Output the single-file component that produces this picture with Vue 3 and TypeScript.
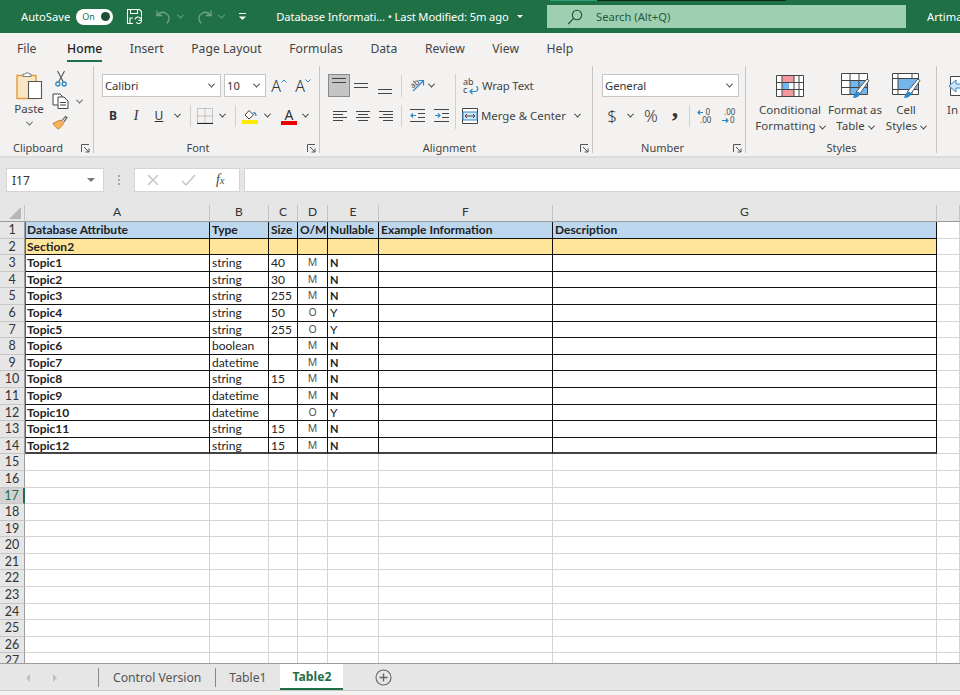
<script setup lang="ts">
interface Row {
  name: string
  type: string
  size: string
  om: string
  nullable: string
}

const tabs = ['File', 'Home', 'Insert', 'Page Layout', 'Formulas', 'Data', 'Review', 'View', 'Help']
const columns = ['A', 'B', 'C', 'D', 'E', 'F', 'G', '']

const rows: Row[] = [
  { name: 'Topic1', type: 'string', size: '40', om: 'M', nullable: 'N' },
  { name: 'Topic2', type: 'string', size: '30', om: 'M', nullable: 'N' },
  { name: 'Topic3', type: 'string', size: '255', om: 'M', nullable: 'N' },
  { name: 'Topic4', type: 'string', size: '50', om: 'O', nullable: 'Y' },
  { name: 'Topic5', type: 'string', size: '255', om: 'O', nullable: 'Y' },
  { name: 'Topic6', type: 'boolean', size: '', om: 'M', nullable: 'N' },
  { name: 'Topic7', type: 'datetime', size: '', om: 'M', nullable: 'N' },
  { name: 'Topic8', type: 'string', size: '15', om: 'M', nullable: 'N' },
  { name: 'Topic9', type: 'datetime', size: '', om: 'M', nullable: 'N' },
  { name: 'Topic10', type: 'datetime', size: '', om: 'O', nullable: 'Y' },
  { name: 'Topic11', type: 'string', size: '15', om: 'M', nullable: 'N' },
  { name: 'Topic12', type: 'string', size: '15', om: 'M', nullable: 'N' }
]

const emptyRows = [15, 16, 17, 18, 19, 20, 21, 22, 23, 24, 25, 26, 27]
</script>

<template>
  <div class="app">
    <header class="titlebar">
      <span class="autosave">AutoSave</span>
      <span class="toggle"><span>On</span><i></i></span>
      <svg class="t-save" width="17" height="17" viewBox="0 0 17 17" fill="none" stroke="#fff" stroke-width="1.1">
        <path d="M7 15.5H1.5v-14h12l2 2v5" />
        <path d="M4.5 1.5v4h7v-4M4 15v-5h3" />
        <path d="M9 11.5a3 3 0 0 1 5.4-1.2l1-.9v3h-3M15.6 13a3 3 0 0 1-5.3 1.4" />
      </svg>
      <svg class="t-undo" width="15" height="16" viewBox="0 0 15 16" fill="none" stroke="#6fa68a" stroke-width="1.3">
        <path d="M1 1.5v5h5M1.4 6.2C3.5 3.5 7 2.6 10 4.2c3.6 2 4 6.6 1 10" />
      </svg>
      <span class="chev dim t-c1"></span>
      <svg class="t-redo" width="15" height="16" viewBox="0 0 15 16" fill="none" stroke="#6fa68a" stroke-width="1.3">
        <path d="M14 1.5v5H9M13.6 6.2C11.5 3.5 8 2.6 5 4.2c-3.6 2-4 6.6-1 10" />
      </svg>
      <span class="chev dim t-c2"></span>
      <svg class="t-more" width="9" height="8" viewBox="0 0 9 8" fill="#fff">
        <rect x="1" y="0" width="7" height="1" />
        <path d="M1 3.500h7L4.500 7z" />
      </svg>
      <span class="doc-title">Database Informati... • Last Modified: 5m ago</span>
      <span class="tri-down"></span>
      <div class="search">
        <svg width="16" height="16" viewBox="0 0 16 16" fill="none" stroke="#14523a" stroke-width="1.1">
          <circle cx="10" cy="6" r="4.7" />
          <path d="M6.6 9.4 1.2 15" />
        </svg>
        <span>Search (Alt+Q)</span>
      </div>
      <span class="user">Artima</span>
      <span class="strip"><b></b><i></i></span>
    </header>

    <nav class="menu">
      <span v-for="tab in tabs" :key="tab" class="menu-item" :class="{ active: tab === 'Home' }">{{ tab }}</span>
    </nav>

    <section class="ribbon">
      <!-- Clipboard -->
      <div class="group g-clip">
        <div class="clip-body">
          <div class="paste">
            <svg width="28" height="31" viewBox="0 0 28 31" fill="none">
              <path d="M2 5.500h19v23H2z" fill="#fbe6c4" stroke="#e59a3a" stroke-width="1.4" />
              <path d="M8 5.500V4h2.500a1.800 1.800 0 0 1 3.500 0H16v2.500H8z" fill="#fff" stroke="#7a7a7a" />
              <path d="M13.500 11.500h13v17h-13z" fill="#fff" stroke="#555" stroke-width="1.1" />
            </svg>
            <span class="paste-label">Paste</span>
            <span class="chev"></span>
          </div>
          <div class="clip-tools">
            <svg width="12" height="17" viewBox="0 0 12 17" fill="none" stroke="#555" stroke-width="1.1">
              <path d="M2.500 1 8.400 12M9.500 1 3.600 12" />
              <circle cx="2.800" cy="14" r="2" stroke="#2e87c9" stroke-width="1.3" />
              <circle cx="9.200" cy="14" r="2" stroke="#2e87c9" stroke-width="1.3" />
            </svg>
            <div class="copy-row">
              <svg width="17" height="16" viewBox="0 0 17 16" fill="#fff" stroke="#444" stroke-width="1">
                <path d="M1 1h7l2 2v9H1z" />
                <path d="M6 4h6l4 4v7.500H6z" />
                <path d="M8 9.500h6M8 12h6" />
              </svg>
              <span class="chev"></span>
            </div>
            <svg width="16" height="15" viewBox="0 0 16 15" fill="none">
              <path d="M9.500 6 13.500 1.500l1.500 1.200-3.500 4.600" stroke="#555" stroke-width="1.1" />
              <path d="M1 8.500 8 5l3.500 4-5 5.200C4.500 13 2.500 11 1 8.500z" fill="#f3b45f" stroke="#d9822b" />
            </svg>
          </div>
        </div>
        <div class="group-label">Clipboard</div>
        <svg class="launcher" width="9" height="9" viewBox="0 0 9 9" fill="none" stroke="#555"><path d="M.5 8V.5H8M3 3l5 5M8 4.500V8H4.500" /></svg>
      </div>

      <!-- Font -->
      <div class="group g-font">
        <div class="group-body">
          <div class="tool-row">
            <div class="combo font-name"><span>Calibri</span><span class="chev dark"></span></div>
            <div class="combo font-size"><span>10</span><span class="chev dark"></span></div>
            <span class="btn w16 ml5 grow-a">A<svg width="6" height="4" viewBox="0 0 6 4" fill="none" stroke="#2e87c9"><path d="M.5 3.500 3 1l2.500 2.500" /></svg></span>
            <span class="btn w16 ml8 shrink-a">A<svg width="6" height="4" viewBox="0 0 6 4" fill="none" stroke="#2e87c9"><path d="M.5.500 3 3 5.500.500" /></svg></span>
          </div>
          <div class="tool-row second">
            <span class="btn w22 fmt bold">B</span>
            <span class="btn w24 fmt italic">I</span>
            <span class="btn w22 fmt under">U</span>
            <span class="btn w14"><span class="chev dark"></span></span>
            <span class="sep ml6"></span>
            <span class="btn w16 ml6">
              <svg width="16" height="16" viewBox="0 0 16 16" fill="none" stroke="#999" stroke-dasharray="1 1">
                <path d="M.5.500h15v15H.5zM8 .5v15M.5 8h15" />
                <path d="M0 15.500h16" stroke="#222" stroke-width="1.200" stroke-dasharray="none" />
              </svg>
            </span>
            <span class="btn w18"><span class="chev dark"></span></span>
            <span class="sep ml4"></span>
            <span class="btn w16 ml6">
              <svg width="16" height="16" viewBox="0 0 16 16" fill="none">
                <path d="M3 7 7 2.500 11.500 7 7 11z" fill="#fff" stroke="#444" />
                <path d="M11 5c2-1 3 1 3 3" stroke="#2e87c9" stroke-width="1.300" />
                <rect y="12" width="16" height="4" fill="#ffeb00" />
              </svg>
            </span>
            <span class="btn w18"><span class="chev dark"></span></span>
            <span class="btn w16 ml5 color-a">A<i></i></span>
            <span class="btn w16"><span class="chev dark"></span></span>
          </div>
        </div>
        <div class="group-label">Font</div>
        <svg class="launcher" width="9" height="9" viewBox="0 0 9 9" fill="none" stroke="#555"><path d="M.5 8V.5H8M3 3l5 5M8 4.500V8H4.500" /></svg>
      </div>

      <!-- Alignment -->
      <div class="group g-align">
        <div class="align-body">
          <div class="align-left">
            <div class="tool-row">
              <span class="btn selected"><span class="lines top"><i></i><i></i></span></span>
              <span class="btn w22"><span class="lines mid"><i></i><i></i></span></span>
              <span class="btn w26"><span class="lines bot"><i></i><i></i></span></span>
              <span class="sep ml3"></span>
              <span class="btn w16 ml7">
                <svg width="16" height="15" viewBox="0 0 16 15" fill="none">
                  <text x="1" y="9" font-size="8" fill="#444" font-family="Noto Sans, sans-serif" transform="rotate(-40 5 6)">ab</text>
                  <path d="M4 13 14 3M9.500 2.500H14.500V7.500" stroke="#2e87c9" stroke-width="1.200" />
                </svg>
              </span>
              <span class="btn w12"><span class="chev dark"></span></span>
            </div>
            <div class="tool-row second">
              <span class="btn w23"><span class="lines left"><i></i><i></i><i></i><i></i></span></span>
              <span class="btn w23"><span class="lines center"><i></i><i></i><i></i><i></i></span></span>
              <span class="btn w24"><span class="lines right"><i></i><i></i><i></i><i></i></span></span>
              <span class="sep ml3"></span>
              <span class="btn w16 ml7">
                <svg width="15" height="13" viewBox="0 0 15 13" fill="none" stroke="#444">
                  <path d="M0 .5h15M8 4.500h7M8 8.500h7M0 12.500h15" />
                  <path d="M6 6.500H1M3 4.500l-2 2 2 2" stroke="#2e87c9" stroke-width="1.200" />
                </svg>
              </span>
              <span class="btn w16 ml8">
                <svg width="15" height="13" viewBox="0 0 15 13" fill="none" stroke="#444">
                  <path d="M0 .5h15M8 4.500h7M8 8.500h7M0 12.500h15" />
                  <path d="M1 6.500h5M4 4.500l2 2-2 2" stroke="#2e87c9" stroke-width="1.200" />
                </svg>
              </span>
            </div>
          </div>
          <span class="sep tall"></span>
          <div class="align-right">
            <div class="tool-row">
              <svg class="wrap-icon" width="16" height="18" viewBox="0 0 16 18" fill="none">
                <text x="0" y="8" font-size="9" fill="#444" font-family="Noto Sans, sans-serif">ab</text>
                <text x="0" y="16" font-size="9" fill="#444" font-family="Noto Sans, sans-serif">c</text>
                <path d="M13 9.500c2.500 0 2.500 5-1 5H7.500M9.500 12 7 14.500 9.500 17" stroke="#2e87c9" stroke-width="1.200" />
              </svg>
              <span class="tool-text wrap-text">Wrap Text</span>
            </div>
            <div class="tool-row second">
              <svg class="merge-icon" width="16" height="16" viewBox="0 0 16 16" fill="none" stroke="#444">
                <path d="M.5.500h15v15H.5z" fill="#fff" />
                <path d="M1 4h14v8H1z" fill="#cfe6f7" stroke="#2e87c9" />
                <path d="M3 8h10M5 6 3 8l2 2M11 6l2 2-2 2" stroke="#444" />
              </svg>
              <span class="tool-text">Merge &amp; Center</span>
              <span class="chev dark merge-chev"></span>
            </div>
          </div>
        </div>
        <div class="group-label">Alignment</div>
        <svg class="launcher" width="9" height="9" viewBox="0 0 9 9" fill="none" stroke="#555"><path d="M.5 8V.5H8M3 3l5 5M8 4.500V8H4.500" /></svg>
      </div>

      <!-- Number -->
      <div class="group g-number">
        <div class="group-body">
          <div class="tool-row">
            <div class="combo number-format"><span>General</span><span class="chev dark"></span></div>
          </div>
          <div class="tool-row second">
            <span class="btn w20 sym">$</span>
            <span class="btn w16"><span class="chev dark"></span></span>
            <span class="btn w26 sym">%</span>
            <span class="btn w22 sym comma">,</span>
            <span class="sep ml3"></span>
            <span class="btn w16 ml7 dec">
              <svg width="16" height="16" viewBox="0 0 16 16" fill="none">
                <path d="M6 4.500H1M3 2.500l-2 2 2 2" stroke="#2e87c9" stroke-width="1.200" />
                <text x="8.500" y="7" font-size="8" fill="#444" font-family="Noto Sans, sans-serif">0</text>
                <text x="3" y="15" font-size="8" fill="#444" font-family="Noto Sans, sans-serif">.00</text>
              </svg>
            </span>
            <span class="btn w16 ml8 dec">
              <svg width="16" height="16" viewBox="0 0 16 16" fill="none">
                <text x="3" y="7" font-size="8" fill="#444" font-family="Noto Sans, sans-serif">.00</text>
                <path d="M1 12.500h6M5 10.500l2 2-2 2" stroke="#2e87c9" stroke-width="1.200" />
                <text x="9" y="15" font-size="8" fill="#444" font-family="Noto Sans, sans-serif">0</text>
              </svg>
            </span>
          </div>
        </div>
        <div class="group-label">Number</div>
        <svg class="launcher" width="9" height="9" viewBox="0 0 9 9" fill="none" stroke="#555"><path d="M.5 8V.5H8M3 3l5 5M8 4.500V8H4.500" /></svg>
      </div>

      <!-- Styles -->
      <div class="group g-styles">
        <div class="styles-body">
          <div class="style-btn s1">
            <svg width="28" height="22" viewBox="0 0 28 22" fill="none">
              <path d="M.5.500h27v21H.5z" fill="#fff" />
              <path d="M6 .5h12v7H6zM6 14.500h12v7H6z" fill="#f3989c" />
              <path d="M6 7.500h7v7H6z" fill="#74b5ec" />
              <path d="M.5.500h27v21H.5zM6 .5v21M18 .5v21M23 .5v21M.5 7.500h27M.5 14.500h27" stroke="#444" />
            </svg>
            <span>Conditional</span>
            <span>Formatting<i class="chev dark"></i></span>
          </div>
          <div class="style-btn s2">
            <svg width="29" height="26" viewBox="0 0 29 26" fill="none">
              <path d="M.5.500h26v21H.5z" fill="#fff" />
              <path d="M9 7.500h17.500v14H9z" fill="#74b5ec" />
              <path d="M.5.500h26v21H.5zM9 .5v21M18 .5v21M.5 7.500h26M.5 14.500h26" stroke="#444" />
              <path d="M15 19 26 6l2 1.500-9 13" fill="#fff" stroke="#555" />
              <path d="M12 25c1-3 2-6 5-6.500l2.500 2c-1 3-4 4.500-7.500 4.500z" fill="#2e87c9" />
            </svg>
            <span>Format as</span>
            <span>Table<i class="chev dark"></i></span>
          </div>
          <div class="style-btn s3">
            <svg width="29" height="26" viewBox="0 0 29 26" fill="none">
              <path d="M.5.500h26v21H.5z" fill="#fff" />
              <path d="M6 5.500h20.500v11H6z" fill="#74b5ec" />
              <path d="M.5.500h26v21H.5z" stroke="#444" />
              <path d="M.5 5.500h26M.5 16.500h26M6 .5v21M20 .5V5M20 17v4.500" stroke="#444" />
              <path d="M15 19 26 6l2 1.500-9 13" fill="#fff" stroke="#555" />
              <path d="M12 25c1-3 2-6 5-6.500l2.500 2c-1 3-4 4.500-7.500 4.500z" fill="#2e87c9" />
            </svg>
            <span>Cell</span>
            <span>Styles<i class="chev dark"></i></span>
          </div>
        </div>
        <div class="group-label">Styles</div>
      </div>

      <!-- Cells, cut off by the window -->
      <div class="group g-cells">
        <div class="style-btn s4">
          <svg width="28" height="22" viewBox="0 0 28 22" fill="none">
            <path d="M3.500 1.500h24v19h-24z" fill="#fff" stroke="#444" />
            <path d="M9 5 2 11l7 6v-4h8V9H9z" fill="#cfe6f7" stroke="#2e87c9" />
          </svg>
          <span>In</span>
        </div>
      </div>
    </section>

    <section class="formula-bar">
      <div class="name-box"><span>I17</span><i class="tri-grey"></i></div>
      <span class="dots"><i></i><i></i><i></i></span>
      <div class="fx-box">
        <svg width="14" height="14" viewBox="0 0 14 14" fill="none" stroke="#c2c2c2" stroke-width="1.400"><path d="m2 2 10 10M12 2 2 12" /></svg>
        <svg width="15" height="14" viewBox="0 0 15 14" fill="none" stroke="#c2c2c2" stroke-width="1.400"><path d="m1 8 4 4 9-10" /></svg>
        <span class="fx"><em>f</em><em class="x">x</em></span>
      </div>
      <div class="formula-input"></div>
    </section>

    <section class="sheet">
      <div class="grid">
        <div class="col-head corner"><i></i></div>
        <div v-for="col in columns" :key="col" class="col-head">{{ col }}</div>

        <!-- row 1 -->
        <div class="row-head">1</div>
        <div class="cell tb blue name first">Database Attribute</div>
        <div class="cell tb blue name">Type</div>
        <div class="cell tb blue name">Size</div>
        <div class="cell tb blue name">O/M</div>
        <div class="cell tb blue name">Nullable</div>
        <div class="cell tb blue name">Example Information</div>
        <div class="cell tb blue name">Description</div>
        <div class="cell"></div>

        <!-- row 2 -->
        <div class="row-head">2</div>
        <div class="cell tb yellow name first">Section2</div>
        <div v-for="n in 6" :key="n" class="cell tb yellow"></div>
        <div class="cell"></div>

        <template v-for="(row, i) in rows" :key="row.name">
          <div class="row-head">{{ i + 3 }}</div>
          <div class="cell tb name first" :class="{ last: i === rows.length - 1 }">{{ row.name }}</div>
          <div class="cell tb" :class="{ last: i === rows.length - 1 }">{{ row.type }}</div>
          <div class="cell tb" :class="{ last: i === rows.length - 1 }">{{ row.size }}</div>
          <div class="cell tb om" :class="{ last: i === rows.length - 1 }">{{ row.om }}</div>
          <div class="cell tb" :class="{ last: i === rows.length - 1, nullable: row.nullable === 'N' }">{{ row.nullable }}</div>
          <div class="cell tb" :class="{ last: i === rows.length - 1 }"></div>
          <div class="cell tb" :class="{ last: i === rows.length - 1 }"></div>
          <div class="cell"></div>
        </template>

        <template v-for="n in emptyRows" :key="n">
          <div class="row-head" :class="{ current: n === 17 }">{{ n }}</div>
          <div v-for="c in 8" :key="c" class="cell"></div>
        </template>
      </div>
    </section>

    <footer class="sheet-tabs">
      <div class="tab-nav">
        <i class="arrow-left"></i>
        <i class="arrow-right"></i>
      </div>
      <div class="sheet-tab">Control Version</div>
      <div class="sheet-tab">Table1</div>
      <div class="sheet-tab active">Table2</div>
      <svg class="add-sheet" width="17" height="17" viewBox="0 0 17 17" fill="none" stroke="#666" stroke-width="1.100">
        <circle cx="8.500" cy="8.500" r="7.500" />
        <path d="M8.500 4.500v8M4.500 8.500h8" stroke-width="1.400" />
      </svg>
    </footer>
    <div class="status"></div>
  </div>
</template>

<style scoped>
.app {
  width: 960px;
  height: 695px;
  overflow: hidden;
  display: flex;
  flex-direction: column;
  background: #fff;
  font-family: "Noto Sans", "Open Sans", sans-serif;
  color: #444;
}

/* ===== title bar ===== */
.titlebar {
  position: relative;
  height: 33px;
  flex-shrink: 0;
  display: flex;
  align-items: center;
  background: #1f7045;
  color: #fff;
  font-size: 11.2px;
}

.autosave {
  margin-left: 21px;
}

.toggle {
  margin-left: 6px;
  width: 37px;
  height: 16px;
  border-radius: 8px;
  background: #fff;
  color: #1f7045;
  display: flex;
  align-items: center;
  justify-content: space-between;
  padding: 0 3px 0 6px;
  box-sizing: border-box;
  font-size: 9px;
}

.toggle i {
  width: 9px;
  height: 9px;
  border-radius: 50%;
  background: #1b4e33;
}

.t-save {
  margin-left: 13px;
}

.t-undo {
  margin-left: 13px;
}

.t-c1 {
  margin-left: 7px;
}

.t-redo {
  margin-left: 14px;
}

.t-c2 {
  margin-left: 7px;
}

.t-more {
  margin-left: 14px;
}

.doc-title {
  margin-left: 29px;
  white-space: nowrap;
  letter-spacing: -0.12px;
}

.tri-down {
  margin-left: 8px;
  border-left: 3px solid transparent;
  border-right: 3px solid transparent;
  border-top: 3px solid #fff;
}

.search {
  position: absolute;
  left: 547px;
  top: 5px;
  width: 359px;
  height: 23px;
  background: #9fcfb1;
  display: flex;
  align-items: center;
  gap: 13px;
  padding-left: 20px;
  box-sizing: border-box;
  color: #1d5c3c;
}

.user {
  position: absolute;
  left: 927px;
  top: 9px;
  white-space: nowrap;
}

.strip {
  position: absolute;
  left: 550px;
  top: 0;
  display: flex;
  height: 1px;
}

.strip b {
  width: 47px;
  background: #27a37a;
}

.strip i {
  width: 189px;
  background: #10261b;
}

/* chevrons */
.chev {
  display: inline-block;
  width: 4px;
  height: 4px;
  border-right: 1px solid #555;
  border-bottom: 1px solid #555;
  transform: rotate(45deg) translate(-1px, -1px);
}

.chev.dim {
  border-color: #6fa68a;
}

.chev.dark {
  border-color: #333;
}

/* ===== menu tabs ===== */
.menu {
  height: 29px;
  flex-shrink: 0;
  display: flex;
  align-items: center;
  gap: 27.6px;
  padding-left: 17px;
  background: #f3f2f1;
  font-size: 12.2px;
  box-sizing: border-box;
  padding-top: 2px;
}

.menu-item {
  position: relative;
  white-space: nowrap;
}

.menu-item:first-child {
  margin-right: 3px;
}

.menu-item.active {
  color: #222;
  font-weight: 500;
}

.menu-item.active::after {
  content: '';
  position: absolute;
  left: 0;
  right: 0;
  bottom: -5px;
  height: 2px;
  background: #1f7045;
}

/* ===== ribbon ===== */
.ribbon {
  height: 94px;
  flex-shrink: 0;
  display: flex;
  background: #f3f2f1;
  border-bottom: 2px solid #dcdcdc;
  box-sizing: content-box;
}

.group {
  position: relative;
  box-sizing: border-box;
  flex-shrink: 0;
  display: flex;
  flex-direction: column;
  padding-top: 12px;
}

.group::after {
  content: '';
  position: absolute;
  right: 0;
  top: 4px;
  bottom: 3px;
  width: 1px;
  background: #c8c6c4;
}

.group-label {
  position: absolute;
  left: 0;
  right: 0;
  bottom: 0;
  height: 16px;
  text-align: center;
  font-size: 11px;
  line-height: 16px;
  color: #444;
}

.g-clip .group-label,
.g-font .group-label {
  right: 18px;
}

.g-align .group-label,
.g-number .group-label {
  right: 14px;
}

.launcher {
  position: absolute;
  right: 4px;
  bottom: 3px;
}

.g-clip {
  width: 94px;
  padding-top: 8px;
}

.g-font {
  width: 226px;
  padding-left: 8px;
}

.g-align {
  width: 273px;
  padding-left: 8px;
}

.g-number {
  width: 153px;
  padding-left: 9px;
}

.g-styles {
  width: 191px;
  padding-left: 6px;
  padding-top: 11px;
}

.g-cells {
  width: 40px;
  padding-left: 10px;
  padding-top: 11px;
}

.group-body {
  display: flex;
  flex-direction: column;
}

.tool-row {
  display: flex;
  align-items: center;
  height: 23px;
}

.tool-row.second {
  margin-top: 7px;
}

.btn {
  display: flex;
  align-items: center;
  justify-content: center;
  height: 23px;
  flex-shrink: 0;
}

.w12 { width: 12px; }
.w14 { width: 14px; }
.w16 { width: 16px; }
.w18 { width: 18px; }
.w20 { width: 20px; }
.w22 { width: 22px; }
.w23 { width: 23px; }
.w24 { width: 24px; }
.w26 { width: 26px; }
.ml3 { margin-left: 3px; }
.ml4 { margin-left: 4px; }
.ml5 { margin-left: 5px; }
.ml6 { margin-left: 6px; }
.ml7 { margin-left: 7px; }
.ml8 { margin-left: 8px; }

.sep {
  width: 1px;
  height: 22px;
  background: #d2d0ce;
  flex-shrink: 0;
}

.sep.tall {
  height: 55px;
}

/* clipboard */
.clip-body {
  display: flex;
  padding-left: 14px;
}

.paste {
  width: 30px;
  display: flex;
  flex-direction: column;
  align-items: center;
}

.paste-label {
  font-size: 11.5px;
  line-height: 16px;
}

.paste .chev {
  margin-top: 4px;
}

.clip-tools {
  margin-left: 8px;
  display: flex;
  flex-direction: column;
  align-items: flex-start;
  gap: 6px;
}

.clip-tools > svg:first-child {
  margin-left: 3px;
}

.copy-row {
  display: flex;
  align-items: center;
  gap: 8px;
}

/* font */
.combo {
  box-sizing: border-box;
  height: 23px;
  background: #fff;
  border: 1px solid #c8c6c4;
  display: flex;
  align-items: center;
  justify-content: space-between;
  padding: 0 6px 0 2px;
  font-size: 11.2px;
  color: #333;
  flex-shrink: 0;
}

.font-name {
  width: 119px;
}

.font-size {
  width: 42px;
  margin-left: 3px;
}

.number-format {
  width: 137px;
}

.grow-a,
.shrink-a {
  font-size: 16px;
  font-weight: 300;
  color: #333;
}

.grow-a svg,
.shrink-a svg {
  align-self: flex-start;
  margin-top: 5px;
}

.fmt {
  font-size: 12px;
  color: #333;
}

.bold {
  font-weight: 700;
}

.italic {
  font-family: "Liberation Serif", serif;
  font-style: italic;
  font-size: 14px;
}

.under {
  text-decoration: underline;
}

.color-a {
  position: relative;
  font-size: 14px;
  color: #333;
  padding-bottom: 3px;
  box-sizing: border-box;
}

.color-a i {
  position: absolute;
  left: 0;
  right: 0;
  bottom: 2px;
  height: 4px;
  background: #ee0000;
}

/* alignment */
.align-body {
  display: flex;
}

.align-left {
  width: 127px;
}

.align-right {
  padding-left: 6px;
}

.btn.selected {
  width: 22px;
  box-sizing: border-box;
  background: #c5c5c5;
  border: 1px solid #8a8a8a;
}

.lines {
  display: flex;
  flex-direction: column;
  gap: 3px;
  height: 17px;
  width: 14px;
}

.lines i {
  display: block;
  height: 1px;
  background: #444;
}

.lines.top {
  justify-content: flex-start;
  padding-top: 1px;
}

.lines.mid {
  justify-content: center;
}

.lines.bot {
  justify-content: flex-end;
}

.lines.left,
.lines.center,
.lines.right {
  justify-content: center;
  gap: 2px;
}

.lines.left i:nth-child(even) {
  width: 10px;
}

.lines.center i:nth-child(even) {
  width: 10px;
  align-self: center;
}

.lines.right i:nth-child(even) {
  width: 10px;
  align-self: flex-end;
}

.wrap-icon {
  margin-left: 1px;
}

.tool-text {
  margin-left: 3px;
  font-size: 11.4px;
  white-space: nowrap;
}

.tool-text.wrap-text {
  letter-spacing: -0.2px;
}

.merge-chev {
  margin-left: 9px;
}

/* number */
.sym {
  font-size: 17px;
  font-weight: 300;
  color: #333;
}

.comma {
  font-family: "Liberation Serif", serif;
  font-weight: 700;
  font-size: 26px;
  padding-bottom: 14px;
  box-sizing: border-box;
}

/* styles */
.styles-body {
  display: flex;
}

.style-btn {
  display: flex;
  flex-direction: column;
  align-items: center;
  font-size: 11.5px;
  line-height: 16px;
  white-space: nowrap;
}

.style-btn svg {
  height: 26px;
  margin-bottom: 3px;
}

.style-btn .chev {
  margin-left: 4px;
}

.s1 {
  width: 76px;
}

.s2 {
  width: 54px;
}

.s3 {
  width: 48px;
}

.s4 {
  align-items: flex-start;
  width: 30px;
}

/* ===== formula bar ===== */
.formula-bar {
  height: 47px;
  flex-shrink: 0;
  box-sizing: border-box;
  background: #e6e6e6;
  padding: 10px 0 13px 6px;
  display: flex;
  align-items: stretch;
}

.name-box {
  width: 98px;
  box-sizing: border-box;
  background: #fff;
  border: 1px solid #d4d4d4;
  display: flex;
  align-items: center;
  justify-content: space-between;
  padding: 0 8px 0 5px;
  font-size: 12px;
  color: #333;
}

.tri-grey {
  border-left: 4px solid transparent;
  border-right: 4px solid transparent;
  border-top: 4px solid #777;
}

.dots {
  width: 30px;
  display: flex;
  flex-direction: column;
  align-items: center;
  justify-content: center;
  gap: 2px;
}

.dots i {
  width: 2px;
  height: 2px;
  background: #aaa;
}

.fx-box {
  width: 106px;
  box-sizing: border-box;
  background: #fff;
  border: 1px solid #d4d4d4;
  display: flex;
  align-items: center;
  gap: 21px;
  padding-left: 11px;
}

.fx {
  font-family: "Liberation Serif", serif;
  font-size: 14px;
  color: #444;
  margin-left: -1px;
}

.fx .x {
  font-size: 10px;
}

.formula-input {
  flex: 1;
  margin-left: 4px;
  background: #fff;
  border: 1px solid #d4d4d4;
  border-right: none;
}

/* ===== sheet ===== */
.sheet {
  flex: 1;
  min-height: 0;
  overflow: hidden;
  background: #fff;
}

.grid {
  display: grid;
  grid-template-columns: 25px 185px 59px 29px 30px 51px 174px 384px 23px;
  grid-template-rows: 17px;
  grid-auto-rows: 16.6px;
  font-family: Lato, "Liberation Sans", sans-serif;
  font-size: 12px;
  color: #222;
}

.col-head {
  background: #e6e6e6;
  border-right: 1px solid #c4c4c4;
  border-bottom: 1px solid #9b9b9b;
  box-sizing: border-box;
  text-align: center;
  font-size: 12px;
  line-height: 14px;
  color: #333;
}

.corner {
  position: relative;
}

.corner i {
  position: absolute;
  right: 3px;
  bottom: 2px;
  border-left: 12px solid transparent;
  border-bottom: 12px solid #b7b7b7;
}

.row-head {
  background: #e6e6e6;
  border-right: 1px solid #9b9b9b;
  border-bottom: 1px solid #c6c6c6;
  box-sizing: border-box;
  text-align: center;
  font-size: 12.5px;
  line-height: 15px;
  color: #333;
  overflow: hidden;
}

.row-head.current {
  background: #d2d2d2;
  color: #1f7045;
  border-right: 2px solid #1f7045;
}

.cell {
  box-sizing: border-box;
  border-right: 1px solid #d4d4d4;
  border-bottom: 1px solid #d4d4d4;
  padding-left: 2px;
  line-height: 16px;
  white-space: nowrap;
  overflow: hidden;
}

.cell.tb {
  border-right-color: #111;
  border-bottom-color: #111;
}

.cell.first {
  border-left: 1px solid #666;
  padding-left: 1px;
}

.cell.last {
  border-bottom: 2px solid #444;
}

.blue {
  background: #bdd7ee;
}

.yellow {
  background: #ffe599;
}

.name {
  font-weight: 700;
}

.om {
  text-align: center;
  padding-left: 0;
  font-family: "Noto Sans", sans-serif;
  font-size: 10.5px;
  line-height: 15px;
  color: #555;
}

.nullable {
  font-weight: 700;
  font-size: 11px;
}

/* ===== sheet tabs ===== */
.sheet-tabs {
  height: 28px;
  flex-shrink: 0;
  box-sizing: border-box;
  display: flex;
  align-items: stretch;
  background: #e6e6e6;
  border-top: 1px solid #9d9d9d;
  border-bottom: 1px solid #c8c8c8;
  font-size: 12.2px;
}

.tab-nav {
  width: 98px;
  box-sizing: border-box;
  display: flex;
  align-items: center;
  gap: 23px;
  padding-left: 26px;
  padding-top: 2px;
}

.arrow-left {
  border-top: 4px solid transparent;
  border-bottom: 4px solid transparent;
  border-right: 4px solid #c0c0c0;
}

.arrow-right {
  border-top: 4px solid transparent;
  border-bottom: 4px solid transparent;
  border-left: 4px solid #c0c0c0;
}

.sheet-tab {
  position: relative;
  display: flex;
  align-items: center;
  padding: 0 14px;
  color: #555;
  white-space: nowrap;
}

.sheet-tab:nth-child(2) {
  padding-left: 15px;
}

.sheet-tab::before {
  content: '';
  position: absolute;
  left: 0;
  top: 4px;
  height: 19px;
  width: 1px;
  background: #888;
}

.sheet-tab.active {
  box-sizing: border-box;
  width: 63px;
  justify-content: center;
  padding: 0;
  background: #fff;
  color: #1f7045;
  font-weight: 700;
  border-bottom: 2px solid #1f7045;
}

.sheet-tab.active::before {
  display: none;
}

.add-sheet {
  margin-left: 32px;
  align-self: center;
}

.status {
  height: 4px;
  flex-shrink: 0;
  background: #f3f2f1;
}
</style>
